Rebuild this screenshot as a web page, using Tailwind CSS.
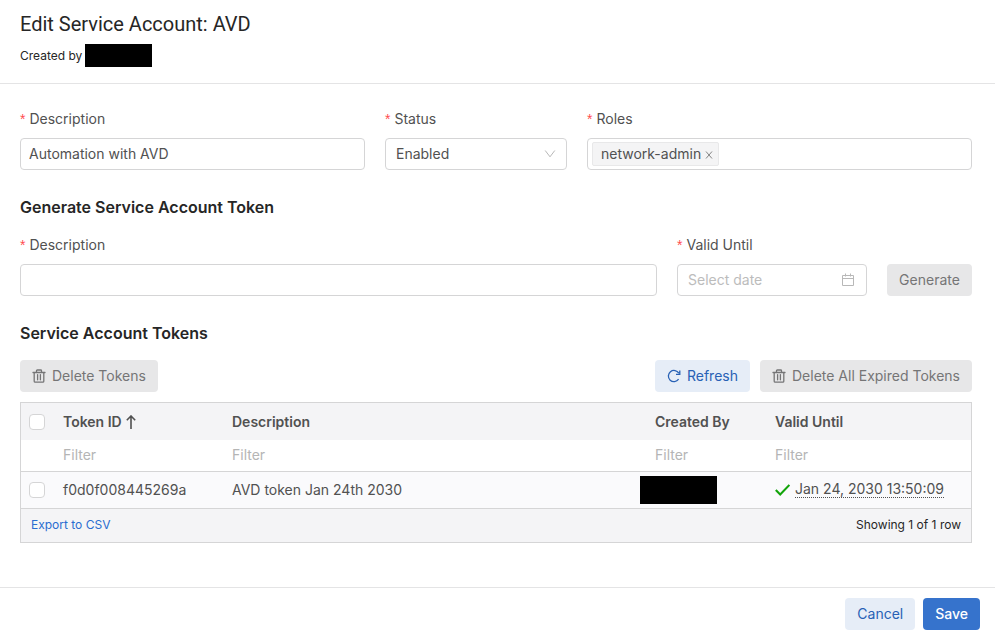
<!DOCTYPE html>
<html lang="en">
<head>
<meta charset="utf-8">
<meta name="viewport" content="width=device-width, initial-scale=1">
<title>Edit Service Account: AVD</title>
<script src="https://cdn.jsdelivr.net/npm/@tailwindcss/browser@4"></script>
</head>
<body class="bg-white font-['Inter','Liberation_Sans',sans-serif] text-sm text-[#515151]">
<svg class="hidden" aria-hidden="true">
  <symbol id="trash" viewBox="0 0 14 14"><path d="M1 3.5h12M4.5 3.2V1.8q0-.8.8-.8h3.4q.8 0 .8.8v1.4M2.2 3.5v8.7q0 1 1 1h7.6q1 0 1-1V3.5M5.6 5.6v5.2M8.4 5.6v5.2" fill="none" stroke="currentColor" stroke-width="1.3" stroke-linecap="round"/></symbol>
</svg>
<div class="flex min-h-screen flex-col">
  <header class="border-b border-[#e4e4e5] px-5 pt-2 pb-4">
    <h1 class="font-['Roboto','Inter',sans-serif] text-xl leading-8 text-[#262626]">Edit Service Account: AVD</h1>
    <p class="mt-1 flex items-center gap-[3px] text-xs text-[#262626]">Created by <span class="h-[23px] w-[67px] bg-black"></span></p>
  </header>

  <main class="flex-1 pt-6 pr-[23px] pb-11 pl-5">
    <form>
      <div class="grid grid-cols-[345fr_182fr_385fr] gap-5">
        <div>
          <label for="account-description" class="flex h-[22px] items-center gap-1"><span class="font-['Liberation_Sans'] text-[#ff4d4f]">*</span>Description</label>
          <input id="account-description" type="text" value="Automation with AVD" class="mt-2 block h-8 w-full rounded border border-[#d5d5d6] bg-white px-2 pb-0.5">
        </div>
        <div>
          <label for="status" class="flex h-[22px] items-center gap-1"><span class="font-['Liberation_Sans'] text-[#ff4d4f]">*</span>Status</label>
          <div class="relative mt-2">
            <select id="status" class="block h-8 w-full appearance-none rounded border border-[#d5d5d6] bg-white px-2.5"><option>Enabled</option></select>
            <svg class="pointer-events-none absolute top-2.5 right-[11px] size-3" viewBox="0 0 12 12" fill="none" stroke="#b8b8b8" aria-hidden="true"><path d="M1.2 2.5 6 8.8l4.8-6.3"/></svg>
          </div>
        </div>
        <div>
          <label for="roles" class="flex h-[22px] items-center gap-1"><span class="font-['Liberation_Sans'] text-[#ff4d4f]">*</span>Roles</label>
          <div class="mt-2 flex h-8 items-center gap-1 rounded border border-[#d5d5d6] px-1">
            <span class="flex h-6 items-center gap-0.5 rounded-xs border border-[#e8e8e9] bg-[#f4f4f5] pr-[3px] pl-2">network-admin
              <button type="button" aria-label="Remove network-admin" class="flex size-3 items-center justify-center"><svg class="mt-0.5 size-2.5" viewBox="0 0 10 10" fill="none" stroke="#858585" aria-hidden="true"><path d="m2 1.5 6 7m0-7-6 7"/></svg></button>
            </span>
            <input id="roles" type="text" class="h-6 min-w-0 flex-1 outline-none">
          </div>
        </div>
      </div>

      <h2 class="mt-[25px] text-base leading-6 font-semibold text-[#262626]">Generate Service Account Token</h2>
      <div class="mt-[15px] grid grid-cols-[637fr_190fr_85fr] items-end gap-5">
        <div>
          <label for="token-description" class="flex h-[22px] items-center gap-1"><span class="font-['Liberation_Sans'] text-[#ff4d4f]">*</span>Description</label>
          <input id="token-description" type="text" class="mt-2 block h-8 w-full rounded border border-[#d5d5d6] bg-white px-2 pb-0.5">
        </div>
        <div>
          <label for="valid-until" class="flex h-[22px] items-center gap-1"><span class="font-['Liberation_Sans'] text-[#ff4d4f]">*</span>Valid Until</label>
          <div class="relative mt-2">
            <input id="valid-until" type="text" placeholder="Select date" class="block h-8 w-full rounded border border-[#d5d5d6] bg-white pr-8 pb-0.5 pl-2.5 placeholder:text-[#bcbcbc]">
            <svg class="pointer-events-none absolute top-2 right-[11px] size-4" viewBox="0 0 16 16" fill="none" stroke="#b8b8b8" aria-hidden="true"><path d="M2.5 3.5h11v10h-11zM2.5 6.5h11M5.5 1.5v3M10.5 1.5v3"/></svg>
          </div>
        </div>
        <button type="button" disabled class="h-8 rounded bg-[#e7e7e8] text-center text-[#757576]">Generate</button>
      </div>
    </form>

    <h2 class="mt-[25px] text-base leading-6 font-semibold text-[#262626]">Service Account Tokens</h2>
    <div class="mt-[15px] flex items-center gap-2.5">
      <button type="button" disabled class="mr-auto flex h-8 items-center gap-1.5 rounded bg-[#e7e7e8] px-3 text-[#757576]"><svg class="size-3.5" aria-hidden="true"><use href="#trash"/></svg>Delete Tokens</button>
      <button type="button" class="flex h-8 items-center gap-1.5 rounded bg-[#e6edf7] px-3 text-[#2861b5]"><svg class="size-3.5" viewBox="0 0 14 14" fill="none" stroke="currentColor" stroke-width="1.3" aria-hidden="true"><path d="M11.6 10.2a5.6 5.6 0 1 1 .2-6M12.8 1.4v3.9H9"/></svg>Refresh</button>
      <button type="button" disabled class="flex h-8 items-center gap-1.5 rounded bg-[#e7e7e8] px-3 text-[#757576]"><svg class="size-3.5" aria-hidden="true"><use href="#trash"/></svg>Delete All Expired Tokens</button>
    </div>

    <div class="mt-2.5 border border-[#d5d5d6] bg-[#f4f4f6]">
      <table class="w-full table-fixed text-left">
        <colgroup><col class="w-8"><col class="w-[169px]"><col><col class="w-[120px]"><col class="w-[206px]"></colgroup>
        <thead>
          <tr class="h-[37px]">
            <th class="p-0 pl-2"><input type="checkbox" aria-label="Select all tokens" class="block size-4 appearance-none rounded border border-[#d5d5d6] bg-white"></th>
            <th class="px-2.5 font-semibold" aria-sort="ascending"><span class="flex items-center gap-1">Token ID <svg class="h-3.5 w-2.5" viewBox="0 0 10 14" fill="none" stroke="currentColor" stroke-width="1.6" aria-hidden="true"><path d="M5 14V1.2M.8 5.2 5 1l4.2 4.2"/></svg></span></th>
            <th class="px-2.5 font-semibold">Description</th>
            <th class="px-2.5 font-semibold">Created By</th>
            <th class="px-2.5 font-semibold">Valid Until</th>
          </tr>
          <tr class="h-[31px] border-b border-[#d5d5d6] bg-white">
            <td class="p-0"></td>
            <td class="px-2.5 py-0"><input type="text" aria-label="Filter token ID" placeholder="Filter" class="block w-full placeholder:text-[#b5b5b5]"></td>
            <td class="px-2.5 py-0"><input type="text" aria-label="Filter description" placeholder="Filter" class="block w-full placeholder:text-[#b5b5b5]"></td>
            <td class="px-2.5 py-0"><input type="text" aria-label="Filter created by" placeholder="Filter" class="block w-full placeholder:text-[#b5b5b5]"></td>
            <td class="px-2.5 py-0"><input type="text" aria-label="Filter valid until" placeholder="Filter" class="block w-full placeholder:text-[#b5b5b5]"></td>
          </tr>
        </thead>
        <tbody>
          <tr class="h-[37px] border-b border-[#d5d5d6] bg-[#fafafc]">
            <td class="p-0 pl-2"><input type="checkbox" aria-label="Select token f0d0f008445269a" class="block size-4 appearance-none rounded border border-[#d5d5d6] bg-white"></td>
            <td class="px-2.5">f0d0f008445269a</td>
            <td class="px-2.5">AVD token Jan 24th 2030</td>
            <td class="p-0"><span class="-ml-[5px] block h-7 w-[77px] bg-black"></span></td>
            <td class="px-2.5"><span class="flex items-center gap-[5px]"><svg class="h-3 w-[15px]" viewBox="0 0 15 12" fill="none" stroke="#12a40a" stroke-width="2.1" role="img" aria-label="Valid"><path d="m.8 6 4.4 4.4L14.4.9"/></svg><span class="border-b border-dotted border-[#515151] leading-4 whitespace-nowrap">Jan 24, 2030 13:50:09</span></span></td>
          </tr>
        </tbody>
      </table>
      <div class="flex h-[33px] items-center justify-between px-2.5 text-xs text-[#262626]">
        <a href="#" class="text-[#2a6dd0]">Export to CSV</a>
        <span>Showing 1 of 1 row</span>
      </div>
    </div>
  </main>

  <footer class="flex justify-end gap-2 border-t border-[#e4e4e5] px-[15px] pt-2.5 pb-[7px]">
    <button type="button" class="h-8 rounded bg-[#e6edf7] px-3 text-[#2861b5]">Cancel</button>
    <button type="button" class="h-8 rounded bg-[#3673cc] px-3 font-medium text-white">Save</button>
  </footer>
</div>
</body>
</html>
